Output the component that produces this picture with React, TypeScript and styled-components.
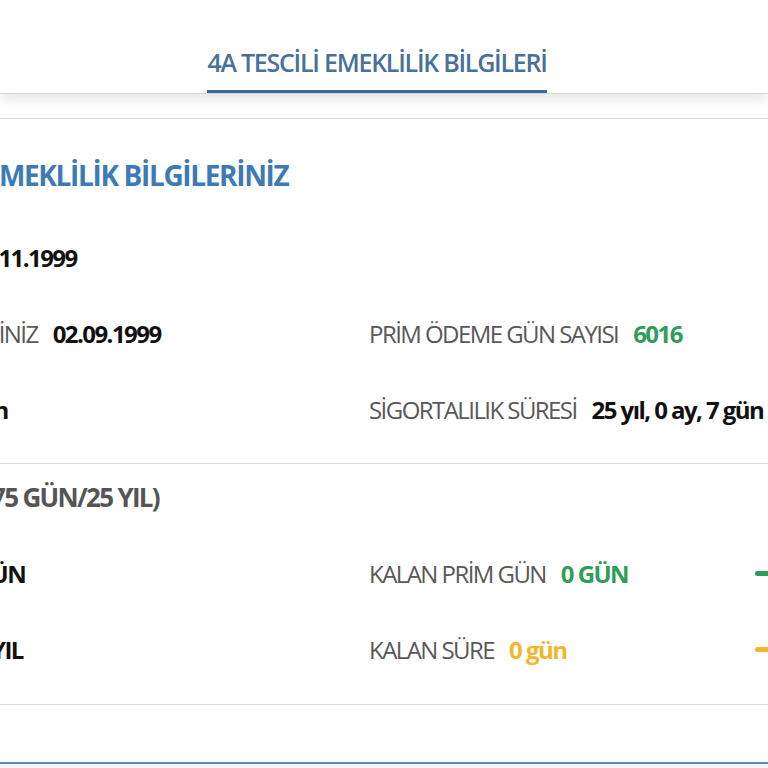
import React from "react";
import styled, { createGlobalStyle } from "styled-components";

const Global = createGlobalStyle`
  html, body { margin: 0; padding: 0; background: #ffffff; }
  body { font-family: "Open Sans", "Noto Sans", sans-serif; }
  * { box-sizing: border-box; }
`;

const Page = styled.div`
  width: 768px;
  height: 768px;
  overflow: hidden;
  background: #fff;
  font-stretch: 88%;
`;

const TabBar = styled.div`
  height: 94px;
  display: flex;
  justify-content: center;
  align-items: flex-end;
  padding-right: 14px;
  border-bottom: 1px solid #d4d4d4;
  box-shadow: 0 5px 12px rgba(0, 0, 0, 0.1);
  position: relative;
  z-index: 1;
`;

const Tab = styled.div`
  height: 93px;
  display: flex;
  align-items: center;
  padding-top: 33px;
  border-bottom: 3px solid #3d6b99;
  font-size: 25px;
  font-weight: 600;
  letter-spacing: -0.05em;
  color: #47709a;
  white-space: nowrap;
`;

const Card = styled.div`
  margin-top: 24px;
  margin-left: -170px;
  width: 1300px;
  border-top: 1px solid #dedede;
`;

const Section = styled.div<{ $top: number; $bottom: number }>`
  padding: ${(p) => p.$top}px 20px ${(p) => p.$bottom}px;
  border-bottom: 1px solid #dcdcdc;
`;

const Heading = styled.div<{ $tone: "blue" | "gray"; $size: number; $spacing: number }>`
  height: 36px;
  display: flex;
  align-items: center;
  font-size: ${(p) => p.$size}px;
  font-weight: 700;
  letter-spacing: ${(p) => p.$spacing}em;
  white-space: nowrap;
  color: ${(p) => (p.$tone === "blue" ? "#3d7ab8" : "#555555")};
`;

const Grid = styled.div<{ $gap: number }>`
  margin-top: ${(p) => p.$gap}px;
  display: grid;
  grid-template-columns: 519px 1fr;
  grid-auto-rows: 76px;
`;

const Cell = styled.div`
  display: flex;
  align-items: center;
  white-space: nowrap;
  font-size: 24px;
  letter-spacing: -0.065em;
`;

const BarCell = styled(Cell)`
  width: 686px;
`;

const Label = styled.span`
  color: #585858;
  font-weight: 400;
  margin-right: 15px;
`;

const Value = styled.span<{ $color?: string }>`
  color: ${(p) => p.$color || "#111111"};
  font-weight: 700;
`;

const Bar = styled.div<{ $color: string }>`
  margin-left: auto;
  width: 300px;
  height: 5px;
  border-radius: 3px;
  background: ${(p) => p.$color};
`;

const Footer = styled.div`
  margin-top: 57px;
  height: 20px;
  border-top: 2px solid #5b86b5;
  background: #f3f7fc;
`;

const GREEN = "#2e9d57";
const YELLOW = "#f1b62c";

export default function App() {
  return (
    <Page>
      <Global />
      <TabBar>
        <Tab>4A TESCİLİ EMEKLİLİK BİLGİLERİ</Tab>
      </TabBar>
      <Card>
        <Section $top={38} $bottom={16}>
          <Heading $tone="blue" $size={28} $spacing={-0.048}>
            4A TESCİLİ EMEKLİLİK BİLGİLERİNİZ
          </Heading>
          <Grid $gap={26}>
            <Cell>
              <Label>İLK TESCİLİ</Label>
              <Value>15.11.1999</Value>
            </Cell>
            <Cell />
            <Cell>
              <Label>İŞE GİRİŞ TARİHİNİZ</Label>
              <Value>02.09.1999</Value>
            </Cell>
            <Cell>
              <Label>PRİM ÖDEME GÜN SAYISI</Label>
              <Value $color={GREEN}>6016</Value>
            </Cell>
            <Cell>
              <Label>YAŞINIZ</Label>
              <Value>uygun</Value>
            </Cell>
            <Cell>
              <Label>SİGORTALILIK SÜRESİ</Label>
              <Value>25 yıl, 0 ay, 7 gün</Value>
            </Cell>
          </Grid>
        </Section>
        <Section $top={15} $bottom={17}>
          <Heading $tone="gray" $size={26} $spacing={-0.065}>
            ŞARTLAR (5975 GÜN/25 YIL)
          </Heading>
          <Grid $gap={20}>
            <Cell>
              <Label>PRİMİ</Label>
              <Value>5975 GÜN</Value>
            </Cell>
            <BarCell>
              <Label>KALAN PRİM GÜN</Label>
              <Value $color={GREEN}>0 GÜN</Value>
              <Bar $color={GREEN} />
            </BarCell>
            <Cell>
              <Label>YAŞ ŞARTI</Label>
              <Value>25 YIL</Value>
            </Cell>
            <BarCell>
              <Label>KALAN SÜRE</Label>
              <Value $color={YELLOW}>0 gün</Value>
              <Bar $color={YELLOW} />
            </BarCell>
          </Grid>
        </Section>
        <Footer />
      </Card>
    </Page>
  );
}
